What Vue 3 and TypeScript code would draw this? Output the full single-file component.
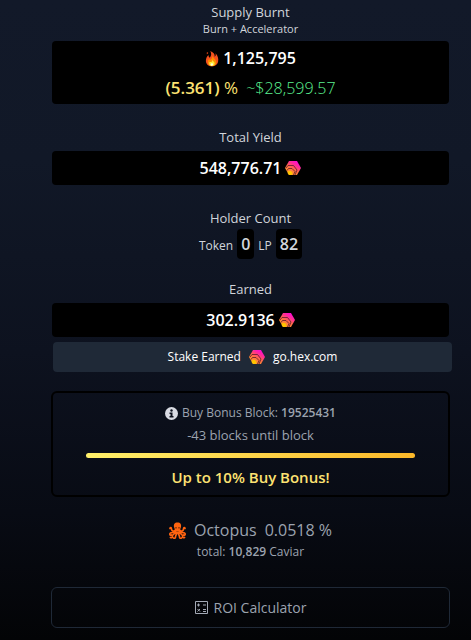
<script setup lang="ts">
import { defineComponent, h } from 'vue'

const HexLogo = defineComponent({
  setup() {
    return () =>
      h('svg', { width: 16, height: 14, viewBox: '0 0 32 28', 'aria-hidden': 'true' }, [
        h('defs', [
          h('linearGradient', { id: 'hex-fill', x1: '0.8', y1: '0', x2: '0.2', y2: '0.85' }, [
            h('stop', { offset: '0', 'stop-color': '#ff00e6' }),
            h('stop', { offset: '0.35', 'stop-color': '#ff2f90' }),
            h('stop', { offset: '0.6', 'stop-color': '#ff6a48' }),
            h('stop', { offset: '1', 'stop-color': '#ff9a25' }),
          ]),
        ]),
        h('path', { d: 'M8 0H24L32 14L24 28H8L0 14Z', fill: 'url(#hex-fill)' }),
        h('path', {
          d: 'M2 14L6 9H17L24 18L20 28M4 19L7 15H14L20 21L17 28',
          fill: 'none',
          stroke: '#5a1630',
          'stroke-width': '1.6',
        }),
        h('path', { d: 'M7 20H12L15 24L13 28H8L5 24Z', fill: '#ffc400' }),
      ])
  },
})

const supply = { burnt: '1,125,795', percent: '(5.361)', usd: '~$28,599.57' }
const totalYield = '548,776.71'
const holders = [
  { label: 'Token', count: 0 },
  { label: 'LP', count: 82 },
]
const earned = '302.9136'
const bonus = { block: 19525431, remaining: -43, label: 'Up to 10% Buy Bonus!' }
const rank = { name: 'Octopus', share: '0.0518 %', total: '10,829' }
</script>

<template>
  <main class="page">
    <section class="stat">
      <h2 class="title">Supply Burnt</h2>
      <p class="subtitle">Burn + Accelerator</p>
      <div class="panel">
        <div class="value">
          <svg class="flame" width="14" height="17" viewBox="0 0 32 36" aria-hidden="true">
            <path d="M12 1C20 4 23 9 22 14C25 12 25 9 24 6C30 12 31 19 30 25C29 32 23 36 16 36C8 36 2 31 2 23C2 17 5 13 8 10C8 13 9 15 11 16C15 12 15 6 12 1Z" fill="#f4511e" />
            <path d="M17 11C18 17 23 18 25 23C28 30 23 35 16 35C9 35 5 30 7 23C8 20 10 20 12 21C16 19 17 15 17 11Z" fill="#ff8f00" />
            <path d="M17 20C17 24 22 25 22 29C22 33 20 35 16 35C11 35 9 32 10 27C11 25 12 26 14 26C16 25 17 23 17 20Z" fill="#ffeb3b" />
            <path d="M16 28C18 30 19 31 18 33C17 35 14 35 13 33C12 31 14 30 16 28Z" fill="#fffde0" />
            <path d="M4 4L7 3L7 7L4 8Z" fill="#b9360f" />
          </svg>
          {{ supply.burnt }}
        </div>
        <div class="burn-rate">
          <span class="percent"><b>{{ supply.percent }}</b> %</span>
          <span class="usd">{{ supply.usd }}</span>
        </div>
      </div>
    </section>

    <section class="stat">
      <h2 class="title">Total Yield</h2>
      <div class="panel">
        <div class="value">{{ totalYield }} <HexLogo /></div>
      </div>
    </section>

    <section class="stat holder-stat">
      <h2 class="title">Holder Count</h2>
      <div class="holders">
        <template v-for="holder in holders" :key="holder.label">
          <span>{{ holder.label }}</span>
          <b class="badge">{{ holder.count }}</b>
        </template>
      </div>
    </section>

    <section class="stat earned">
      <h2 class="title">Earned</h2>
      <div class="panel">
        <div class="value">{{ earned }} <HexLogo /></div>
      </div>
      <a class="stake" href="#stake">Stake Earned <HexLogo /> go.hex.com</a>
    </section>

    <section class="bonus">
      <p class="bonus-line bonus-block">
        <svg width="13" height="13" viewBox="0 0 26 26" aria-hidden="true">
          <circle cx="13" cy="13" r="13" fill="#d9dbe3" />
          <circle cx="13" cy="7" r="2.4" fill="#0b0f1b" />
          <path d="M9 11H15V18H17V21H9V18H11V14H9Z" fill="#0b0f1b" />
        </svg>
        <span>Buy Bonus Block: <b>{{ bonus.block }}</b></span>
      </p>
      <p class="bonus-line">{{ bonus.remaining }} blocks until block</p>
      <div class="bar"></div>
      <p class="bonus-label">{{ bonus.label }}</p>
    </section>

    <section class="rank">
      <p class="rank-name">
        <svg width="17" height="17" viewBox="0 0 34 34" aria-hidden="true">
          <path d="M17 1C11 1 9 5 10 10C11 13 12 15 12 18H22C22 15 23 13 24 10C25 5 23 1 17 1Z" fill="#ff6410" />
          <path
            d="M13 16C10 20 5 18 5 14C5 11 2 10 2 13M21 16C24 20 29 18 29 14C29 11 32 10 32 13M13 19C9 23 3 20 2 23C1 26 3 27 5 26M21 19C25 23 31 20 32 23C33 26 31 27 29 26M14 20C11 25 7 24 7 28C7 31 5 32 3 31M20 20C23 25 27 24 27 28C27 31 29 32 31 31M16 20C15 26 13 27 13 30C13 33 10 33 9 32M18 20C19 26 21 27 21 30C21 33 24 33 25 32"
            fill="none"
            stroke="#ff6410"
            stroke-width="3.4"
            stroke-linecap="round"
          />
          <path d="M13 10H15V13H13ZM19 10H21V13H19Z" fill="#4a1a05" />
        </svg>
        <span>{{ rank.name }}</span>
        <span>{{ rank.share }}</span>
      </p>
      <p class="rank-total">total: <b>{{ rank.total }}</b> Caviar</p>
    </section>

    <button class="roi" type="button">
      <svg width="13" height="13" viewBox="0 0 13 13" aria-hidden="true">
        <path d="M0.5 0.5H12.5V12.5H0.5Z" fill="none" stroke="#a3a9b5" />
        <path d="M2 4H5M3.5 2.5V5.5M8 4H11M2.5 8L5 10.5M5 8L2.5 10.5M8 8.5H11M8 10.5H11" fill="none" stroke="#a3a9b5" />
      </svg>
      ROI Calculator
    </button>
  </main>
</template>

<style>
body {
  margin: 0;
  background: #030408;
}
</style>

<style scoped>
.page {
  box-sizing: border-box;
  min-height: 100vh;
  padding: 2px 21px 12px 51px;
  background: linear-gradient(#121929 0%, #111827 25%, #0d121f 55%, #080b14 80%, #030406 100%);
  color: #d1d5db;
  font-family: "Segoe UI", "Open Sans", "Noto Sans", sans-serif;
  font-size: 13px;
  line-height: 20px;
  text-align: center;
}

h2,
p {
  margin: 0;
}

.stat {
  margin-bottom: 23px;
}

.title {
  font-size: 13px;
  font-weight: 400;
  line-height: 20px;
}

.subtitle {
  font-size: 11px;
  line-height: 14px;
  padding-bottom: 1px;
}

.panel {
  margin: 4px 1px 0;
  border-radius: 4px;
  background: #000;
}

.value {
  display: flex;
  align-items: center;
  justify-content: center;
  gap: 4px;
  height: 34px;
  color: #fff;
  font-size: 16px;
  font-weight: 600;
}

.burn-rate {
  display: flex;
  align-items: baseline;
  justify-content: center;
  gap: 8px;
  padding-bottom: 3px;
  font-size: 16px;
  line-height: 25px;
}

.percent {
  color: #fde272;
  font-size: 17px;
}

.percent b {
  font-weight: 600;
}

.usd {
  color: #5cf090;
  font-weight: 300;
}

.holder-stat {
  margin-bottom: 20px;
}

.holders {
  display: flex;
  align-items: baseline;
  justify-content: center;
  gap: 4px;
  margin-top: 1px;
  font-size: 12px;
}

.badge {
  padding: 0 4px;
  border-radius: 4px;
  background: #000;
  font-size: 16px;
  font-weight: 600;
  line-height: 30px;
}

.earned {
  margin-bottom: 19px;
}

.stake {
  display: flex;
  align-items: center;
  justify-content: center;
  gap: 8px;
  height: 30px;
  margin: 5px -2px 0 2px;
  border-radius: 4px;
  background: #1f2937;
  color: #fff;
  font-size: 12px;
  font-weight: 500;
  text-decoration: none;
}

.bonus {
  padding: 9px 33px 7px;
  border: 2px solid #000;
  border-radius: 6px;
  color: #9ca3af;
}

.bonus-line {
  display: flex;
  align-items: center;
  justify-content: center;
  gap: 4px;
  line-height: 22px;
}

.bonus-block {
  font-size: 12px;
}

.bonus-line b {
  font-weight: 600;
}

.bar {
  height: 5px;
  margin: 7px 0 8px;
  border-radius: 3px;
  background: linear-gradient(90deg, #fff06a, #fbb829);
}

.bonus-label {
  color: #fde272;
  font-size: 15px;
  font-weight: 600;
  line-height: 22px;
}

.rank {
  margin: 21px 0 25px;
  color: #9ca3af;
}

.rank-name {
  display: flex;
  align-items: center;
  justify-content: center;
  gap: 8px;
  font-size: 16px;
  line-height: 24px;
}

.rank-total {
  font-size: 12px;
}

.rank-total b {
  font-weight: 600;
}

.roi {
  display: flex;
  align-items: center;
  justify-content: center;
  gap: 6px;
  width: 100%;
  height: 41px;
  padding: 0;
  border: 1px solid #1f2937;
  border-radius: 6px;
  background: transparent;
  color: #9ca3af;
  font: inherit;
  font-size: 14px;
}
</style>
